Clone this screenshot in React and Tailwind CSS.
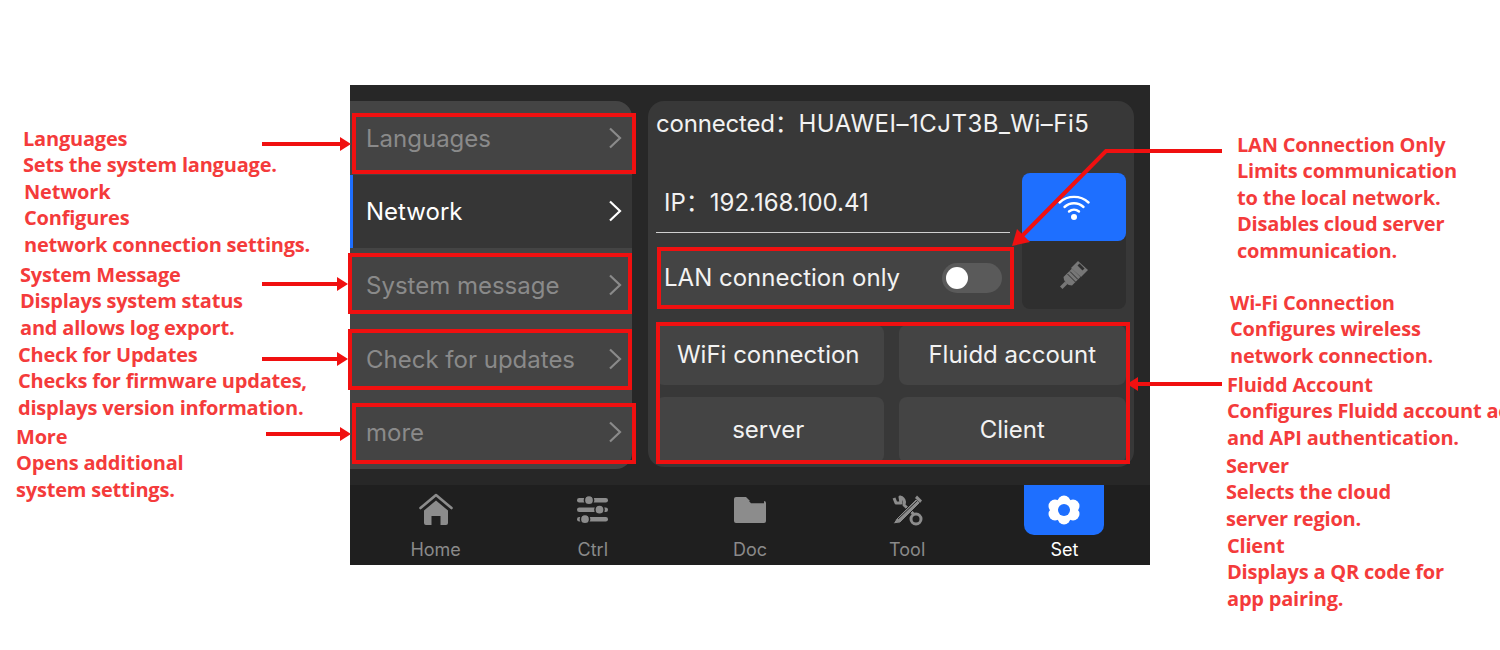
import React from 'react';

const uiFont = "font-['Inter','Noto_Sans_CJK_SC',sans-serif]";

const menu = [
  { label: 'Languages', active: false },
  { label: 'Network', active: true },
  { label: 'System message', active: false },
  { label: 'Check for updates', active: false },
  { label: 'more', active: false },
];

const Chevron = () => (
  <svg width="14" height="22" viewBox="0 0 14 22" fill="none" stroke="currentColor" strokeWidth="2.2">
    <path d="M2 1.5 L12 11 L2 20.5" />
  </svg>
);

const WifiIcon = () => (
  <svg width="32" height="28" viewBox="0 0 32 28" fill="none" stroke="white" strokeWidth="2.4" strokeLinecap="round">
    <path d="M1.5 9.5 C9.5 2 22.5 2 30.5 9.5" />
    <path d="M6.5 14 C12 9 20 9 25.5 14" />
    <path d="M11 18.5 C14 16 18 16 21 18.5" />
    <circle cx="16" cy="24" r="3" fill="white" stroke="none" />
  </svg>
);

const PlugIcon = () => (
  <svg width="30" height="30" viewBox="0 0 30 30" fill="#777777">
    <path d="M1 26.5 L6 21.5 L8.5 24 L3.5 29 Z" />
    <path d="M4.5 17 L13 8.5 L21.5 17 L13 25.5 Q9.5 25.5 7 23 Q4.5 20.5 4.5 17 Z" />
    <path d="M12 8 L19 1 L29 10 L22 17 Z" />
    <path d="M18.5 5.5 L20.5 3.5 L25.5 8.5 L23.5 10.5 Z" fill="#2f2f2f" />
    <path d="M8.5 14 L16.5 22" stroke="#2f2f2f" strokeWidth="1" />
    <path d="M11 11.5 L19 19.5" stroke="#2f2f2f" strokeWidth="1" />
  </svg>
);

const HomeIcon = () => (
  <svg width="34" height="34" viewBox="0 0 34 34" fill="#8c8c8c">
    <path d="M1.5 15 L17 2 L32.5 15" fill="none" stroke="#8c8c8c" strokeWidth="2.6" strokeLinecap="round" strokeLinejoin="round" />
    <path d="M5 17.5 L17 7.5 L29 17.5 V30 Q29 32 27 32 H21.5 V23 H12.5 V32 H7 Q5 32 5 30 Z" />
  </svg>
);

const CtrlIcon = () => (
  <svg width="34" height="30" viewBox="0 0 34 30" fill="#8c8c8c">
    <rect x="1" y="3" width="31" height="4.5" rx="2.2" />
    <rect x="1" y="12.5" width="31" height="4.5" rx="2.2" />
    <rect x="1" y="22" width="31" height="4.5" rx="2.2" />
    <circle cx="13" cy="5.2" r="4.6" stroke="#1f1f1f" strokeWidth="1.5" />
    <circle cx="23.5" cy="14.7" r="4.6" stroke="#1f1f1f" strokeWidth="1.5" />
    <circle cx="9" cy="24.2" r="4.6" stroke="#1f1f1f" strokeWidth="1.5" />
  </svg>
);

const DocIcon = () => (
  <svg width="34" height="30" viewBox="0 0 34 30" fill="#8c8c8c">
    <path d="M1 4 Q1 2 3 2 H13 L17 6 H31 Q33 6 33 8 V26 Q33 28 31 28 H3 Q1 28 1 26 Z" />
    <path d="M16 6 H31 V8.2 H18 Z" fill="#1f1f1f" />
  </svg>
);

const ToolIcon = () => (
  <svg width="34" height="34" viewBox="0 0 34 34" fill="none">
    <path d="M4 5 L6 10 L11 10 L10 4 Q14 5 14.5 9 L14 12 L31 28" stroke="#8c8c8c" strokeWidth="3" strokeLinejoin="round" />
    <circle cx="26" cy="26" r="5" stroke="#8c8c8c" strokeWidth="3" fill="#1f1f1f" />
    <path d="M3 31 L6 26 L26 6 L30 10 L10 30 Z" fill="#8c8c8c" stroke="#1f1f1f" strokeWidth="1" />
    <path d="M8 26 L27 8" stroke="#1f1f1f" strokeWidth="0.9" />
    <path d="M27 2.5 L32 7.5 L30 10 L25 5 Z" fill="#8c8c8c" />
  </svg>
);

const SetIcon = () => (
  <svg width="32" height="30" viewBox="0 0 32 30">
    <g fill="white">
      <circle cx="16" cy="7" r="6.5" />
      <circle cx="16" cy="23" r="6.5" />
      <circle cx="7" cy="11" r="6.5" />
      <circle cx="25" cy="11" r="6.5" />
      <circle cx="7" cy="19" r="6.5" />
      <circle cx="25" cy="19" r="6.5" />
    </g>
    <circle cx="16" cy="15" r="6" fill="#1e6fff" />
  </svg>
);

const tabs = [
  { label: 'Home', icon: <HomeIcon /> },
  { label: 'Ctrl', icon: <CtrlIcon /> },
  { label: 'Doc', icon: <DocIcon /> },
  { label: 'Tool', icon: <ToolIcon /> },
  { label: 'Set', icon: <SetIcon />, active: true },
];

const callouts = [
  { pos: 'left-[23px] top-[126px]', lines: ['Languages', 'Sets the system language.'] },
  { pos: 'left-[24px] top-[179px]', lines: ['Network', 'Configures', 'network connection settings.'] },
  { pos: 'left-[20px] top-[262px]', lines: ['System Message', 'Displays system status', 'and allows log export.'] },
  { pos: 'left-[18px] top-[342px]', lines: ['Check for Updates', 'Checks for firmware updates,', 'displays version information.'] },
  { pos: 'left-[16px] top-[424px]', lines: ['More', 'Opens additional', 'system settings.'] },
  { pos: 'left-[1237px] top-[132px]', lines: ['LAN Connection Only', 'Limits communication', 'to the local network.', 'Disables cloud server', 'communication.'] },
  { pos: 'left-[1230px] top-[290px]', lines: ['Wi-Fi Connection', 'Configures wireless', 'network connection.'] },
  { pos: 'left-[1227px] top-[372px]', lines: ['Fluidd Account', 'Configures Fluidd account access', 'and API authentication.'] },
  { pos: 'left-[1226px] top-[453px]', lines: ['Server', 'Selects the cloud', 'server region.'] },
  { pos: 'left-[1227px] top-[533px]', lines: ['Client', 'Displays a QR code for', 'app pairing.'] },
];

const redBoxes = [
  'left-[352px] top-[113px] w-[284px] h-[61px]',
  'left-[348px] top-[253px] w-[284px] h-[61px]',
  'left-[348px] top-[329px] w-[284px] h-[61px]',
  'left-[352px] top-[403px] w-[284px] h-[61px]',
  'left-[657px] top-[247px] w-[357px] h-[62px]',
  'left-[656px] top-[322px] w-[474px] h-[142px]',
];

const App = () => {
  return (
    <div className={`relative w-[1500px] h-[650px] overflow-hidden bg-white pt-[85px] pl-[350px] ${uiFont}`}>
      <div className="w-[800px] h-[480px] bg-[#272727] flex flex-col">
        <div className="flex-1 flex pt-[16px]">
          <div className="w-[282px] h-[368px] bg-[#444444] rounded-r-[16px] overflow-hidden flex flex-col">
            {menu.map((item) => (
              <div
                key={item.label}
                className={`h-[73.6px] flex items-center justify-between pr-[10px] text-[24px] ${
                  item.active ? 'bg-[#363636] text-white border-l-[3px] border-[#1e6fff] pl-[13px]' : 'text-[#8a8a8a] pl-[16px]'
                }`}
              >
                <span className="pt-[2px]">{item.label}</span>
                <Chevron />
              </div>
            ))}
          </div>

          <div className="ml-[16px] w-[486px] h-[366px] bg-[#383838] rounded-[16px] px-[8px]">
            <div className="h-[72px] pt-[7px] text-[24px] leading-[32px] tracking-[-0.2px] text-[#f2f2f2] whitespace-nowrap">
              connected：<span className="tracking-[0.5px]">HUAWEI–1CJT3B_Wi–Fi5</span>
            </div>
            <div className="flex gap-[12px]">
              <div className="w-[354px] flex flex-col">
                <div className="h-[60px] border-b border-[#d0d0d0] pl-[8px] flex items-center text-[24px] text-[#f2f2f2]">
                  IP：192.168.100.41
                </div>
                <div className="mt-[15px] ml-[2px] h-[60px] bg-[#444444] flex items-center justify-between pl-[6px] pr-[8px] text-[24px] text-[#f2f2f2]">
                  <span>LAN connection only</span>
                  <div className="w-[60px] h-[30px] rounded-full bg-[#5a5a5a] flex items-center pl-[4px]">
                    <div className="w-[22px] h-[22px] rounded-full bg-white"></div>
                  </div>
                </div>
              </div>
              <div className="w-[104px] h-[136px] bg-[#2f2f2f] rounded-[8px]">
                <div className="h-[68px] bg-[#1e6fff] rounded-[8px] flex items-center justify-center">
                  <WifiIcon />
                </div>
                <div className="h-[68px] flex items-center justify-center">
                  <PlugIcon />
                </div>
              </div>
            </div>
            <div className="mt-[16px] grid grid-cols-2 gap-x-[15px] gap-y-[12px] text-[24px] text-[#f2f2f2]">
              <div className="h-[60px] bg-[#444444] rounded-[8px] flex items-center justify-center pr-[3px]">WiFi connection</div>
              <div className="h-[60px] bg-[#444444] rounded-[8px] flex items-center justify-center">Fluidd account</div>
              <div className="h-[66px] bg-[#444444] rounded-[8px] flex items-center justify-center pr-[3px]">server</div>
              <div className="h-[66px] bg-[#444444] rounded-[8px] flex items-center justify-center">Client</div>
            </div>
          </div>
        </div>

        <div className="h-[80px] bg-[#1f1f1f] grid grid-cols-5 px-[7px]">
          {tabs.map((tab) => (
            <div key={tab.label} className="flex flex-col items-center">
              <div className={`w-[80px] h-[50px] flex items-center justify-center ${tab.active ? 'bg-[#1e6fff] rounded-b-[10px]' : ''}`}>
                {tab.icon}
              </div>
              <div className={`mt-[4px] text-[18px] leading-[22px] ${tab.active ? 'text-white' : 'text-[#8a8a8a]'}`}>{tab.label}</div>
            </div>
          ))}
        </div>
      </div>

      {redBoxes.map((pos) => (
        <div key={pos} className={`absolute border-[4px] border-[#f01010] ${pos}`}></div>
      ))}

      <svg className="absolute left-0 top-0 pointer-events-none" width="1500" height="650">
        <g stroke="#f01010" strokeWidth="4" fill="none">
          <path d="M262 144 H342" />
          <path d="M262 284 H340" />
          <path d="M262 359 H340" />
          <path d="M266 434 H342" />
          <path d="M1222 151 H1106 L1022 236" />
          <path d="M1222 384 H1136" />
        </g>
        <g fill="#f01010">
          <path d="M351 144 L340 137 V151 Z" />
          <path d="M348 284 L337 277 V291 Z" />
          <path d="M348 359 L337 352 V366 Z" />
          <path d="M351 434 L340 427 V441 Z" />
          <path d="M1012 246 L1017 229 L1030 242 Z" />
          <path d="M1127 384 L1138 377 V391 Z" />
        </g>
      </svg>

      {callouts.map((c) => (
        <div
          key={c.lines[0]}
          className={`absolute ${c.pos} font-['Open_Sans',sans-serif] font-bold text-[20px] leading-[26.4px] tracking-[-0.2px] text-[#f43b3b] whitespace-nowrap`}
        >
          {c.lines.map((line) => (
            <div key={line}>{line}</div>
          ))}
        </div>
      ))}
    </div>
  );
};

export default App;
